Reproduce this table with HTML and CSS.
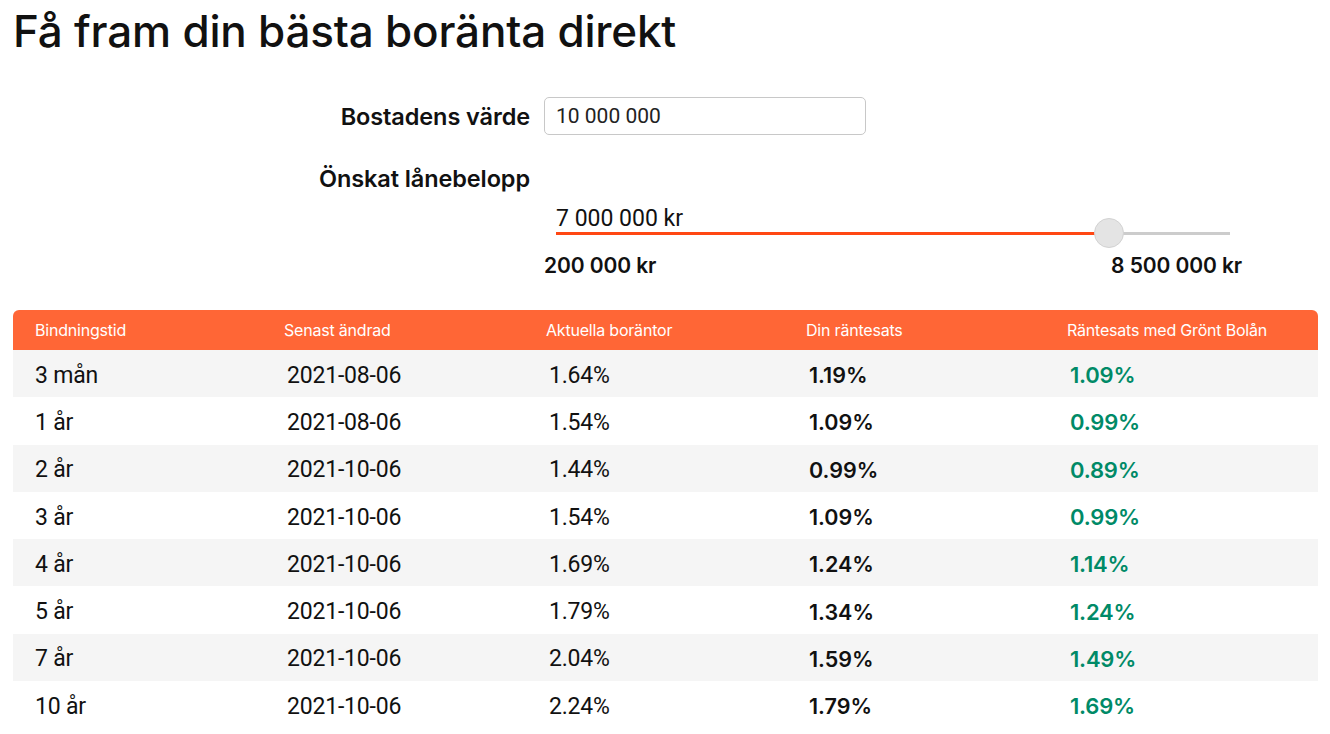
FILE: index.html
```html
<!DOCTYPE html>
<html lang="sv">
<head>
<meta charset="utf-8">
<title>Få fram din bästa boränta direkt</title>
<link rel="stylesheet" href="styles.css">
</head>
<body>
<main class="page">
  <h1 class="title">Få fram din bästa boränta direkt</h1>
  <form class="calc">
    <label class="calc-label" for="value">Bostadens värde</label>
    <div class="calc-control"><input id="value" class="text-input" type="text" value="10 000 000"></div>
    <div class="calc-label calc-label-second">Önskat lånebelopp</div>
    <div class="calc-control"></div>
    <div></div>
    <div class="slider">
      <div class="slider-value">7 000 000 kr</div>
      <div class="slider-track">
        <div class="slider-fill" style="width: 81.9%"></div>
        <div class="slider-thumb" style="left: 81.9%"></div>
      </div>
      <div class="slider-range">
        <span>200 000 kr</span>
        <span>8 500 000 kr</span>
      </div>
    </div>
  </form>

  <div class="rates">
    <div class="rates-row rates-head">
      <div>Bindningstid</div><div>Senast ändrad</div><div>Aktuella boräntor</div><div>Din räntesats</div><div>Räntesats med Grönt Bolån</div>
    </div>
    <div class="rates-row"><div>3 mån</div><div>2021-08-06</div><div>1.64%</div><div class="own">1.19%</div><div class="green">1.09%</div></div>
    <div class="rates-row"><div>1 år</div><div>2021-08-06</div><div>1.54%</div><div class="own">1.09%</div><div class="green">0.99%</div></div>
    <div class="rates-row"><div>2 år</div><div>2021-10-06</div><div>1.44%</div><div class="own">0.99%</div><div class="green">0.89%</div></div>
    <div class="rates-row"><div>3 år</div><div>2021-10-06</div><div>1.54%</div><div class="own">1.09%</div><div class="green">0.99%</div></div>
    <div class="rates-row"><div>4 år</div><div>2021-10-06</div><div>1.69%</div><div class="own">1.24%</div><div class="green">1.14%</div></div>
    <div class="rates-row"><div>5 år</div><div>2021-10-06</div><div>1.79%</div><div class="own">1.34%</div><div class="green">1.24%</div></div>
    <div class="rates-row"><div>7 år</div><div>2021-10-06</div><div>2.04%</div><div class="own">1.59%</div><div class="green">1.49%</div></div>
    <div class="rates-row"><div>10 år</div><div>2021-10-06</div><div>2.24%</div><div class="own">1.79%</div><div class="green">1.69%</div></div>
  </div>
</main>
</body>
</html>
```

FILE: styles.css
```css
html, body {
  margin: 0;
  padding: 0;
  background: #ffffff;
  color: #111111;
}

.page {
  padding: 0 12px 0 13px;
  font-family: Roboto, "Liberation Sans", Arial, sans-serif;
}

.title {
  margin: 0;
  padding-top: 4px;
  font-family: Inter, "Noto Sans", sans-serif;
  font-weight: 500;
  font-size: 44px;
  line-height: 54px;
  letter-spacing: -0.2px;
  color: #111111;
}

.calc {
  display: grid;
  grid-template-columns: 517px 698px;
  column-gap: 14px;
  margin-top: 39px;
}

.calc-label {
  justify-self: end;
  align-self: center;
  font-family: Inter, "Noto Sans", sans-serif;
  font-weight: 600;
  font-size: 23.5px;
  letter-spacing: -0.1px;
  color: #111111;
}

.calc-label-second {
  margin-top: 29px;
}

.calc-control {
  min-height: 38px;
}

.text-input {
  box-sizing: border-box;
  width: 322px;
  height: 38px;
  padding: 0 11px;
  border: 1px solid #c8c8c8;
  border-radius: 5px;
  font-family: Roboto, "Liberation Sans", Arial, sans-serif;
  font-size: 21px;
  color: #222222;
  background: #ffffff;
}

.slider {
  margin-top: 13px;
}

.slider-value {
  padding-left: 12px;
  font-size: 23px;
  line-height: 26px;
  color: #111111;
}

.slider-track {
  position: relative;
  margin: 0 12px;
  height: 3px;
  background: #cccccc;
}

.slider-fill {
  height: 100%;
  background: #ff4713;
}

.slider-thumb {
  position: absolute;
  top: -14px;
  width: 30px;
  height: 30px;
  margin-left: -14px;
  box-sizing: border-box;
  border-radius: 50%;
  background: #e4e4e4;
  border: 1px solid #d2d2d2;
}

.slider-range {
  display: flex;
  justify-content: space-between;
  margin-top: 19px;
  font-family: Inter, "Noto Sans", sans-serif;
  font-weight: 600;
  font-size: 21px;
  letter-spacing: -0.1px;
  line-height: 24px;
  color: #111111;
}

.rates {
  margin-top: 32px;
}

.rates-row {
  display: grid;
  grid-template-columns: 249px 262px 260px 261px 1fr;
  height: 47.3px;
  align-items: center;
  font-size: 23px;
  letter-spacing: -0.2px;
  color: #111111;
}

.rates-row > div {
  padding-left: 22px;
  padding-top: 3px;
}

.rates-row > div + div {
  padding-left: 25px;
}

.rates-row:nth-child(even) {
  background: #f5f5f5;
}

.rates-head {
  height: 40px;
  background: #ff6636;
  border-radius: 6px 6px 0 0;
  font-family: Inter, "Noto Sans", sans-serif;
  font-size: 16px;
  color: #ffffff;
  letter-spacing: -0.2px;
}

.rates-head > div {
  padding-top: 0;
}

.rates-head > div + div {
  padding-left: 22px;
}

.own {
  font-family: Inter, "Noto Sans", sans-serif;
  font-weight: 600;
  font-size: 21.5px;
  letter-spacing: 0;
}

.green {
  font-family: Inter, "Noto Sans", sans-serif;
  font-weight: 600;
  font-size: 22px;
  letter-spacing: -0.2px;
  color: #008a67;
}
```
